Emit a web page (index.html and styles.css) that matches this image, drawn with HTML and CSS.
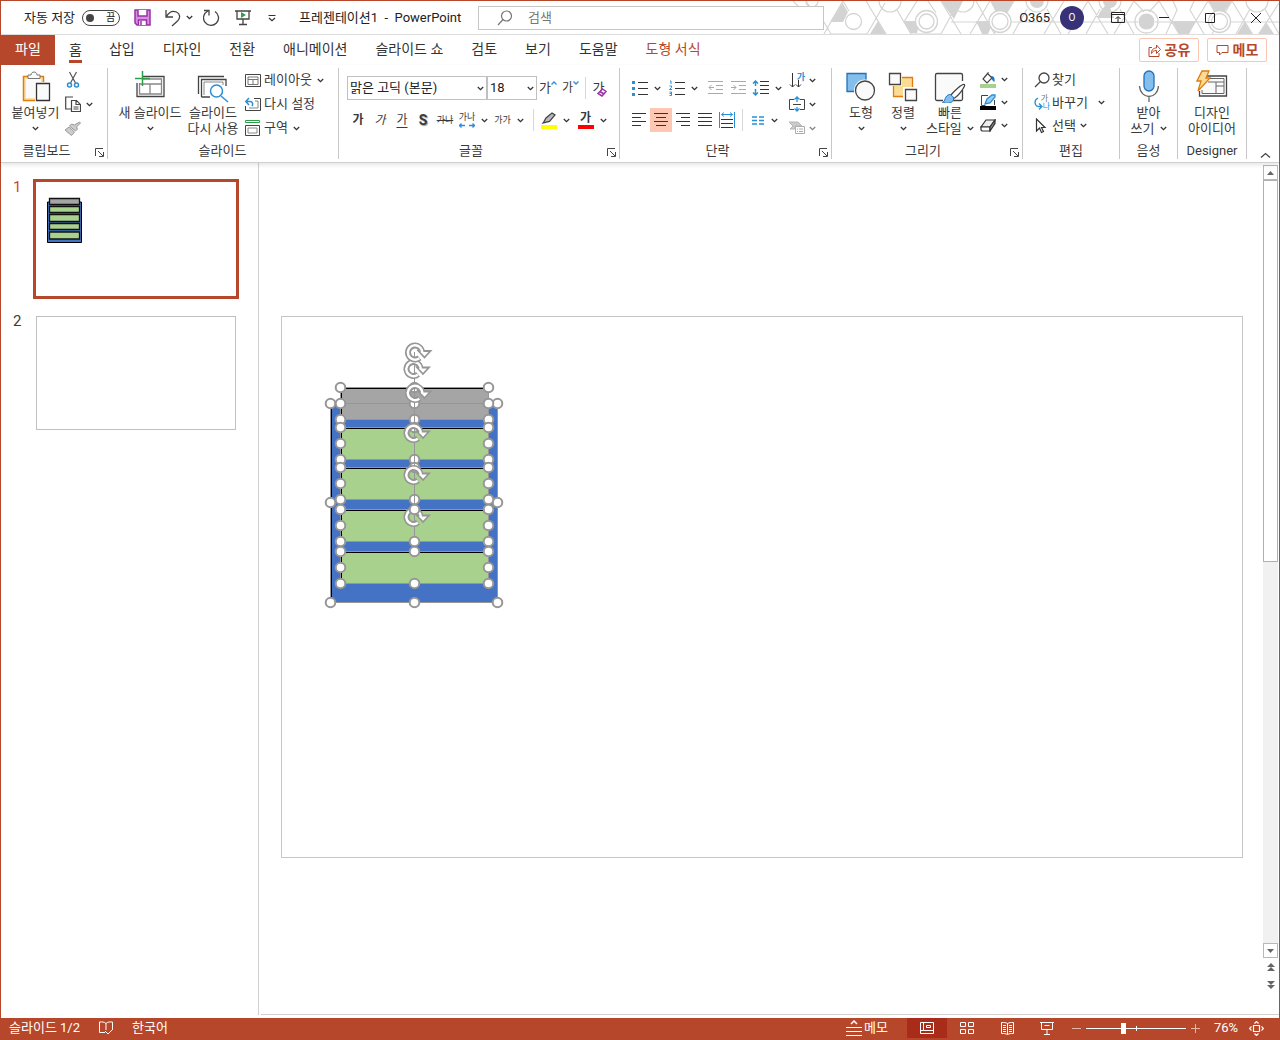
FILE: index.html
```html
<!DOCTYPE html>
<html lang="ko">
<head>
<meta charset="utf-8">
<meta name="viewport" content="width=device-width, initial-scale=1">
<title>프레젠테이션1 - PowerPoint</title>
<link rel="stylesheet" href="styles.css">
</head>
<body>
<svg class="defs" aria-hidden="true">
  <symbol id="chev" viewBox="0 0 7 5"><path d="M.8 1l2.7 2.6L6.200 1" fill="none" stroke="#333" stroke-width="1.300"/></symbol>
  <symbol id="launch" viewBox="0 0 9 9"><path d="M.5 8V.5H8M3 3l5 5M8.500 4v4.500H4" fill="none" stroke="#444"/></symbol>
  <symbol id="rotor" viewBox="-12 -12 30 24" overflow="visible">
    <path d="M7 0A7 7 0 1 0 4.500 5.400" fill="none" stroke="#969696" stroke-width="6"/>
    <path d="M3.500 -1.500H15.500L9.500 5Z" fill="#fff" stroke="#969696" stroke-width="1.800"/>
    <path d="M7.200 .5A7.200 7.200 0 1 0 4.300 5.800" fill="none" stroke="#fff" stroke-width="2.400"/>
  </symbol>
  <symbol id="dot" viewBox="-6 -6 12 12" overflow="visible"><circle r="4.800" fill="#fff" stroke="#969696" stroke-width="2"/></symbol>
</svg>
<div class="window">
  <header class="titlebar">
    <svg class="title-art" viewBox="790 1 489 34" width="489" height="34" aria-hidden="true">
      <g fill="#d3d3d3">
        <path d="M842 2l6 10-5 10h-13zM878 21l8 13h-16zM903 21h17l-3 12h-7zM941 1h22l-9 18zM976 21h18l-6 13h-6zM990 1h24l-7 11h-11zM1100 12l8-10 6 16h-17zM1172 21h24l-7 13h-10zM1208 1h24l-8 11h-10zM1245 21l8 13h-16zM1266 22l8 12h-16z"/>
        <circle cx="1037" cy="1" r="7"/><circle cx="1110" cy="1" r="7"/><circle cx="1146.500" cy="21.500" r="8"/>
      </g>
      <g fill="none" stroke="#d5d5d5" stroke-width="1.200">
        <path d="M793 1l6 6M806 1l4 6M843 1l-19 33M843 1l6 10M824 22l7 12h36l18-31M866 1l20 33M897 10l14 24h30l18-33M917 1l-13 21h17M928 1l8 12M941 1l20 33M951 22h43M976 1l18 32M990 1l-20 33M1014 1l-20 33M1005 22h60M1027 9l-14 25M1047 9l14 25M1064 1l-20 33M1088 1l-20 33M1088 1l20 33M1100 9l-14 25M1120 9l14 25M1080 22h58M1134 1l-20 33M1134 1l10 11M1159 1l-10 11M1159 1l20 33M1155 22h58M1173 1l4 9-11 24M1194 1l-4 9 14 24M1208 1l-20 33M1208 1l10 11M1232 1l-20 33M1228 22h51M1232 1l20 33M1250 9l-14 25M1265 9l14 25M1279 3l-20 31"/>
        <circle cx="890" cy="1" r="11"/><circle cx="963" cy="1" r="11"/><circle cx="1037" cy="1" r="11"/><circle cx="1110" cy="1" r="11"/><circle cx="1257" cy="1" r="11"/><circle cx="812" cy="1" r="6"/>
      </g>
      <g fill="none" stroke="#d3d3d3" stroke-width="1.300">
        <circle cx="853.500" cy="21.500" r="8" fill="#fff"/><circle cx="926.500" cy="21.500" r="11" fill="#fff"/><circle cx="926.500" cy="21.500" r="7.500"/><circle cx="1000" cy="21.500" r="11" fill="#fff"/><circle cx="1000" cy="21.500" r="8"/><circle cx="1146.500" cy="21.500" r="11.500"/><circle cx="1219.500" cy="21.500" r="11" fill="#fff"/><circle cx="1219.500" cy="21.500" r="8"/>
      </g>
    </svg>
    <div class="quick">
      <label class="autosave">자동 저장 <span class="toggle"><input type="checkbox"><span>끔</span></span></label>
      <button aria-label="저장"><svg width="17" height="17"><path d="M1 1h15v15H3l-2-2z" fill="#d78ee0" stroke="#9a2fa8" stroke-width="1.500"/><path d="M4 1v6h9V1M4.500 16v-5h8v5" fill="#fff" stroke="#9a2fa8" stroke-width="1.500"/><path d="M7 12v4" stroke="#9a2fa8" stroke-width="1.500"/></svg></button>
      <button aria-label="실행 취소" class="undo"><svg width="16" height="18" fill="none" stroke="#444" stroke-width="1.300"><path d="M1 1v7h7M1.500 7.500C4 3 8 1.500 11.500 3c4 2 4 6 1 9L7 17"/></svg><svg class="chev"><use href="#chev"/></svg></button>
      <button aria-label="다시 실행"><svg width="18" height="18" fill="none" stroke="#444" stroke-width="1.300"><path d="M12 2.500a7.500 7.500 0 1 1-7-.5M1 1.500h5v5"/></svg></button>
      <button aria-label="슬라이드 쇼 시작"><svg width="16" height="17" fill="none" stroke="#444" stroke-width="1.300"><path d="M0 2h16M2 2v8h12V2M8 10v5M4 15.500h8"/><path d="M6 3l5 3-5 3z" fill="#2e9e4b" stroke="none"/></svg></button>
      <button aria-label="빠른 실행 도구 모음 사용자 지정"><svg width="8" height="8" fill="none" stroke="#333" stroke-width="1.200"><path d="M.5 1.500h7M1 4l3 2.800L7 4"/></svg></button>
    </div>
    <h1 class="doc-title">프레젠테이션1&nbsp; -&nbsp; PowerPoint</h1>
    <div class="search"><svg width="16" height="16" fill="none" stroke="#777" stroke-width="1.200"><circle cx="9.500" cy="6" r="5"/><path d="M6 9.500L1 15"/></svg><input type="text" placeholder="검색" aria-label="검색"></div>
    <div class="account">
      <span>O365</span><button class="avatar" aria-label="계정">O</button>
    </div>
    <div class="sysbtns">
      <button aria-label="리본 표시 옵션"><svg width="14" height="11" fill="none" stroke="#222"><path d="M.5.5h13v10H.5zM.5 2.500h13M7 10V5M4.500 7L7 4.500 9.500 7"/></svg></button>
      <button aria-label="최소화"><svg width="10" height="10"><path d="M0 4.500h10" stroke="#222"/></svg></button>
      <button aria-label="최대화"><svg width="10" height="10"><path d="M.5.5h9v9h-9z" fill="none" stroke="#222"/></svg></button>
      <button aria-label="닫기"><svg width="10" height="10"><path d="M0 0l10 10M10 0L0 10" stroke="#222"/></svg></button>
    </div>
  </header>

  <nav class="tabs">
    <a href="#" class="file">파일</a>
    <a href="#" class="active">홈</a>
    <a href="#">삽입</a><a href="#">디자인</a><a href="#">전환</a><a href="#">애니메이션</a><a href="#">슬라이드 쇼</a><a href="#">검토</a><a href="#">보기</a><a href="#">도움말</a><a href="#" class="context">도형 서식</a>
    <span class="tab-actions">
      <button><svg width="13" height="13" fill="none" stroke="#b7472a"><path d="M4 3.500H1v9h10V9M3.500 9.500c0-4 2-5.500 5-5.500V1l4 4.500-4 4V6.500c-2.500 0-4 1-5 3z"/></svg>공유</button>
      <button><svg width="13" height="12" fill="none" stroke="#b7472a"><path d="M1 1.500h11v7H6L3.500 11V8.500H1z"/></svg>메모</button>
    </span>
  </nav>

  <section class="ribbon">
    <div class="group g-clip">
      <div class="body">
        <button class="big paste"><svg width="30" height="33"><path d="M2.500 6.500h20v24h-20z" fill="#fce0a5" stroke="#e07c10" stroke-width="1.500"/><path d="M5 9h15v19H5z" fill="#fafafa"/><path d="M7 8.500V5h3c0-4 6-4 6 0h3v3.500z" fill="#fafafa" stroke="#777"/><path d="M14 12h16v20H14z" fill="#fff"/><path d="M15.500 13.500h13v17h-13z" fill="#fafafa" stroke="#333" stroke-width="1.300"/></svg><span>붙여넣기</span><svg class="chev"><use href="#chev"/></svg></button>
        <div class="stack">
          <button aria-label="잘라내기"><svg width="16" height="18" fill="none" stroke-width="1.200"><path d="M4.500 1l6 11M11.500 1l-6 11" stroke="#555"/><circle cx="4.500" cy="14" r="2" stroke="#2b8fd6" stroke-width="1.500"/><circle cx="11.500" cy="14" r="2" stroke="#2b8fd6" stroke-width="1.500"/></svg></button>
          <button aria-label="복사"><svg width="16" height="17" fill="#fff" stroke="#444" stroke-width="1.200"><path d="M8 1H.7v12H6"/><path d="M6.500 4.500h5l4 4v7h-9zM11 4.500v4h4.500M8.500 11h5M8.500 13h5"/></svg><svg class="chev"><use href="#chev"/></svg></button>
          <button aria-label="서식 복사"><svg width="16" height="15" fill="#ccc" stroke="#999"><path d="M14.500 1l1 1-4 4 1 2-2 2-6-5 2-2 3 1zM4 6l5.500 5-3 3.500L0 9z"/></svg></button>
        </div>
      </div>
      <footer>클립보드<button class="launch" aria-label="클립보드 옵션"><svg><use href="#launch"/></svg></button></footer>
    </div>

    <div class="group g-slides">
      <div class="body">
        <button class="big new"><svg width="32" height="33" fill="none"><path d="M8 6.500h22v20H3V13" stroke="#444" stroke-width="1.300"/><path d="M9 9h18.500v15H5.500V13M5.500 14h22M16 14v10" stroke="#888" stroke-width="1.300"/><path d="M8.500 1v15M1 8.500h15" stroke="#2e9e4b" stroke-width="1.500"/></svg><span>새 슬라이드</span><svg class="chev"><use href="#chev"/></svg></button>
        <button class="big reuse"><svg width="32" height="33" fill="none"><path d="M1.500 24V6.500H27M4.500 27V9.500H29V16M4.500 27H13" stroke="#444" stroke-width="1.300"/><path d="M7 25V12h19v3" stroke="#888"/><circle cx="19.500" cy="21" r="6" fill="#fff" stroke="#2b8fd6" stroke-width="1.500"/><path d="M24 26l7 6" stroke="#2b8fd6" stroke-width="1.500"/></svg><span>슬라이드<br>다시 사용</span></button>
        <div class="stack">
          <button><svg width="16" height="13" fill="none" stroke="#444"><path d="M.5.5h15v12H.5z"/><path d="M3 3h10v7.500H3zM3 5.500h10M8 5.500v5" stroke="#777"/></svg><span>레이아웃</span><svg class="chev"><use href="#chev"/></svg></button>
          <button><svg width="16" height="14" fill="none" stroke="#444"><path d="M9 1.500h6.500v12H.5V9"/><path d="M10 4h3v7H4" stroke="#888"/><path d="M1 4.500h4c3 0 3 3 2 4.500M4 1L.8 4.500 4 8" stroke="#2b8fd6" stroke-width="1.500"/></svg><span>다시 설정</span></button>
          <button><svg width="16" height="16" fill="none" stroke="#444"><path d="M.5.500h14v2H.5z" stroke="#2e9e4b"/><path d="M.5 5.500h14v10H.5z"/><path d="M3 8h9v5H3z" stroke="#888"/></svg><span>구역</span><svg class="chev"><use href="#chev"/></svg></button>
        </div>
      </div>
      <footer>슬라이드</footer>
    </div>

    <div class="group g-font">
      <div class="body rows">
        <div class="row font1">
          <select aria-label="글꼴"><option>맑은 고딕 (본문)</option></select>
          <select aria-label="글꼴 크기"><option>18</option></select>
          <button aria-label="글꼴 크게" class="glyph-top">가<svg width="6" height="4" fill="none" stroke="#2b8fd6" stroke-width="1.300"><path d="M.5 3.500L3 1l2.500 2.500"/></svg></button>
          <button aria-label="글꼴 작게" class="glyph-top small">가<svg width="6" height="4" fill="none" stroke="#2b8fd6" stroke-width="1.300"><path d="M.5.500L3 3 5.500.500"/></svg></button>
          <i class="sep"></i>
          <button aria-label="서식 지우기" class="clear">가<svg width="10" height="9" fill="#fff" stroke="#9a2fa8" stroke-width="1.500"><path d="M5.500 1l3.500 2.500-4 4.500L1 5.500zM3 3.500L7 6"/></svg></button>
        </div>
        <div class="row font2">
          <button class="b">가</button><button class="i">가</button><button class="u">가</button><button class="s">S</button><button class="strike">가나</button>
          <button class="tiny"><span class="spacing">가나<svg width="16" height="5" fill="none" stroke="#2b8fd6" stroke-width="1.300"><path d="M0 2.500h6M10 2.500h6M2.500.500l-2 2 2 2M13.500.500l2 2-2 2"/></svg></span><svg class="chev"><use href="#chev"/></svg></button>
          <button class="tiny"><span>가가</span><svg class="chev"><use href="#chev"/></svg></button>
          <i class="sep"></i>
          <button aria-label="강조 색"><svg width="16" height="17"><path d="M3 9.500L5 6l6-5 3 2-5.500 6.500L2 11z" fill="#bbb" stroke="#444" stroke-width="1.300"/><path d="M0 13h16v4H0z" fill="#ff0"/></svg><svg class="chev"><use href="#chev"/></svg></button>
          <button aria-label="글꼴 색"><span class="fontcolor">가</span><svg class="chev"><use href="#chev"/></svg></button>
        </div>
      </div>
      <footer>글꼴<button class="launch" aria-label="글꼴 옵션"><svg><use href="#launch"/></svg></button></footer>
    </div>

    <div class="group g-para">
      <div class="body">
        <div class="rows">
          <div class="row para1">
            <button aria-label="글머리 기호"><svg width="16" height="16"><path d="M0 1h3v3H0zM0 7h3v3H0zM0 13h3v3H0z" fill="#2b8fd6"/><path d="M6 2.500h10M6 8.500h10M6 14.500h10" stroke="#333"/></svg><svg class="chev"><use href="#chev"/></svg></button>
            <button aria-label="번호 매기기"><svg width="16" height="16" fill="none"><path d="M1 1h1v3M.500 6h2v1.500l-2 2h2.500M.500 12h2v3.500h-2M.500 13.500h2" stroke="#2b8fd6"/><path d="M6 2.500h10M6 8.500h10M6 14.500h10" stroke="#333"/></svg><svg class="chev"><use href="#chev"/></svg></button>
            <button aria-label="목록 수준 줄임"><svg width="15" height="14" fill="none" stroke="#aaa"><path d="M0 .500h15M8 4.500h7M8 8.500h7M0 12.500h15M1 6.500h5M3.500 4L1 6.500 3.500 9"/></svg></button>
            <button aria-label="목록 수준 늘림"><svg width="15" height="14" fill="none" stroke="#aaa"><path d="M0 .500h15M8 4.500h7M8 8.500h7M0 12.500h15M0 6.500h5M2.500 4L5 6.500 2.500 9"/></svg></button>
            <button aria-label="줄 간격"><svg width="17" height="16" fill="none"><path d="M3.500 1v5M3.500 9v6M1 3.500L3.500 1 6 3.500M1 12.500L3.500 15 6 12.500" stroke="#2b8fd6" stroke-width="1.500"/><path d="M8 1.500h9M8 5.500h9M8 9.500h9M8 13.500h9" stroke="#333"/></svg><svg class="chev"><use href="#chev"/></svg></button>
          </div>
          <div class="row para2">
            <button aria-label="왼쪽 맞춤"><svg width="14" height="14" stroke="#333"><path d="M0 .500h14M0 4.500h9M0 8.500h14M0 12.500h9"/></svg></button>
            <button aria-label="가운데 맞춤" class="on"><svg width="14" height="14" stroke="#333"><path d="M0 .500h14M2 4.500h10M0 8.500h14M2 12.500h10"/></svg></button>
            <button aria-label="오른쪽 맞춤"><svg width="14" height="14" stroke="#333"><path d="M0 .500h14M5 4.500h9M0 8.500h14M5 12.500h9"/></svg></button>
            <button aria-label="양쪽 맞춤"><svg width="14" height="14" stroke="#333"><path d="M0 .500h14M0 4.500h14M0 8.500h14M0 12.500h14"/></svg></button>
            <button aria-label="균등 분할"><svg width="16" height="16" fill="none"><path d="M.500 0v16M15.500 0v16M2.500 2.500h11M5 .500l-2.500 2L5 4.500M11 .500l2.500 2-2.500 2" stroke="#2b8fd6"/><path d="M2 7.500h12M2 11.500h12M2 15.500h12" stroke="#333"/></svg></button>
            <i class="sep"></i>
            <button aria-label="단"><svg width="13" height="9" stroke="#2b8fd6" stroke-width="1.300"><path d="M0 1h5M0 4.500h5M0 8h5M7 1h5M7 4.500h5M7 8h5"/></svg><svg class="chev"><use href="#chev"/></svg></button>
          </div>
        </div>
        <div class="stack dirs">
          <button aria-label="텍스트 방향"><span class="textdir"><svg width="13" height="17" fill="none" stroke="#333"><path d="M3.500 1v14M1 12.500L3.500 15 6 12.500M9.500 8v7M7 12.500L9.500 15 12 12.500"/></svg><b>가</b></span><svg class="chev"><use href="#chev"/></svg></button>
          <button aria-label="텍스트 맞춤"><svg width="16" height="16" fill="none"><path d="M5 3.500H.500v10H5M11 3.500h4.500v10H11M4 8.500h8" stroke="#444"/><path d="M8 1v5M8 11v4M5.500 3.500L8 1l2.500 2.500M5.500 12.500L8 15l2.500-2.500" stroke="#2b8fd6" stroke-width="1.300"/></svg><svg class="chev"><use href="#chev"/></svg></button>
          <button aria-label="SmartArt로 변환" disabled><svg width="16" height="14"><path d="M0 1h9l4 4H6v3H1l3-3z" fill="#aaa" stroke="#888"/><path d="M6.500 5.500h9v7h-9z" fill="#fff" stroke="#777"/><path d="M8 8h1M10 8h4M8 10.500h1M10 10.500h4" stroke="#777"/></svg><svg class="chev"><use href="#chev"/></svg></button>
        </div>
      </div>
      <footer>단락<button class="launch" aria-label="단락 옵션"><svg><use href="#launch"/></svg></button></footer>
    </div>

    <div class="group g-draw">
      <div class="body">
        <button class="big shapes"><svg width="30" height="33"><path d="M1 3.500h19v18H1z" fill="#83beec" stroke="#1f72bd" stroke-width="1.300"/><circle cx="19" cy="20.500" r="11" fill="#fff"/><circle cx="19" cy="20.500" r="9.500" fill="#fafafa" stroke="#444" stroke-width="1.300"/></svg><span>도형</span><svg class="chev"><use href="#chev"/></svg></button>
        <button class="big shapes"><svg width="30" height="33" fill="#fafafa" stroke="#444" stroke-width="1.300"><path d="M5.500 7.500h19v19h-19z" fill="#fbdc94" stroke="#e07c10"/><path d="M0 2h14v14H0zM15 17h15v15H15z" fill="#fff" stroke="none"/><path d="M1.500 3.500h11v11h-11zM17.500 19.500h11v11h-11z"/></svg><span>정렬</span><svg class="chev"><use href="#chev"/></svg></button>
        <button class="big quickst"><svg width="32" height="33"><path d="M9 30.500H3a1.500 1.500 0 0 1-1.500-1.500V5A1.500 1.500 0 0 1 3 3.500h24A1.500 1.500 0 0 1 28.500 5v6M28.500 20v9a1.500 1.500 0 0 1-1.500 1.500h-8" fill="#fafafa" stroke="#444" stroke-width="1.300"/><path d="M30.500 14.500c1.500 1-6 12-11 14l-3-3C20 21 28 13.500 30.500 14.500z" fill="#fff" stroke="#444" stroke-width="1.300"/><path d="M15.500 24.500c2 0 5 3 4 5.500-2 4-8 3.500-11 2.500 3-1 2-7 7-8z" fill="#83beec" stroke="#1f72bd"/></svg><span>빠른<br>스타일 <svg class="chev"><use href="#chev"/></svg></span></button>
        <div class="stack tight">
          <button aria-label="도형 채우기"><svg width="16" height="16"><path d="M8 1L3 7l4 4 5-5-4-4z" fill="#fff" stroke="#444" stroke-width="1.200"/><path d="M11 4c3 0 4 2 3.500 6C12 9 12 7 11 4z" fill="#1f72bd"/><path d="M0 12h16v4H0z" fill="#a9d18e"/></svg><svg class="chev"><use href="#chev"/></svg></button>
          <button aria-label="도형 윤곽선"><svg width="16" height="17"><path d="M8 1.500H1.500v10h4M14.500 6v5" fill="none" stroke="#444"/><path d="M5 10l2-5 5-4h3v2L10 9z" fill="#9dcdf2" stroke="#2b8fd6" stroke-width="1.300"/><path d="M0 12h16v4H0z"/></svg><svg class="chev"><use href="#chev"/></svg></button>
          <button aria-label="도형 효과"><svg width="16" height="13" stroke="#333" stroke-width="1.200"><path d="M6 1h9l-5 7H1z" fill="#eee"/><path d="M1 8h9v4H2l-1-1z" fill="#fff"/><path d="M15 1v3.500L10 12V8z" fill="#888"/></svg><svg class="chev"><use href="#chev"/></svg></button>
        </div>
      </div>
      <footer>그리기<button class="launch" aria-label="그리기 옵션"><svg><use href="#launch"/></svg></button></footer>
    </div>

    <div class="group g-edit">
      <div class="body">
        <div class="stack tight">
          <button><svg width="16" height="16" fill="none" stroke="#444" stroke-width="1.300"><circle cx="10" cy="6" r="5"/><path d="M6.500 9.500L1 15"/></svg><span>찾기</span></button>
          <button class="replace"><span class="swap"><svg width="16" height="16" fill="none" stroke="#2b8fd6" stroke-width="1.300"><path d="M4 3C0 5 0 10 4 11.500h3M5 8.500l3 3-3 3"/></svg><small>가</small><small class="na">나</small></span><span>바꾸기</span><svg class="chev"><use href="#chev"/></svg></button>
          <button><svg width="16" height="16" fill="#fff" stroke="#333" stroke-width="1.200"><path d="M2.500 1v12l3-3 2 4.500 2-1-2-4H11z"/></svg><span>선택</span><svg class="chev"><use href="#chev"/></svg></button>
        </div>
      </div>
      <footer>편집</footer>
    </div>

    <div class="group g-voice">
      <div class="body">
        <button class="big"><svg width="22" height="33"><rect x="6" y="1" width="10" height="20" rx="5" fill="#83beec" stroke="#1f72bd" stroke-width="1.300"/><path d="M1.500 16c1 14 18 14 19 0M11 26.500V32" fill="none" stroke="#666" stroke-width="1.300"/></svg><span>받아<br>쓰기 <svg class="chev"><use href="#chev"/></svg></span></button>
      </div>
      <footer>음성</footer>
    </div>

    <div class="group g-designer">
      <div class="body">
        <button class="big"><svg width="32" height="33"><path d="M10 6h20.500v20H3.500V21" fill="none" stroke="#444" stroke-width="1.300"/><path d="M12 8.500h16v15H6V20M12 12h16M20 12v11M20 16h8" fill="#fafafa" stroke="#666"/><path d="M6 1h7l-3 7h4L2 21l3-10H1z" fill="#fbdc94" stroke="#e07c10" stroke-width="1.300"/></svg><span>디자인<br>아이디어</span></button>
      </div>
      <footer>Designer</footer>
    </div>
    <button class="collapse" aria-label="리본 메뉴 축소"><svg width="11" height="6" fill="none" stroke="#444" stroke-width="1.300"><path d="M1 5.500l4.500-4 4.500 4"/></svg></button>
  </section>

  <main class="work">
    <ol class="thumbs">
      <li class="current"><span>1</span><a href="#" class="thumb" aria-label="슬라이드 1">
        <svg viewBox="36 182 200 114"><path d="M47.500 202h34v40.500h-34z" fill="#4472c4" stroke="#000"/><g fill="#a9d18e" stroke="#111" stroke-width="1.300"><path d="M49.500 198.500h30v6h-30z" fill="#a5a5a5"/><path d="M49.500 206.500h30v6h-30zM49.500 214.500h30v7h-30zM49.500 223.500h30v6h-30zM49.500 232h30v7h-30z"/></g></svg></a></li>
      <li><span>2</span><a href="#" class="thumb" aria-label="슬라이드 2"></a></li>
    </ol>
    <div class="canvas">
      <div class="slide">
        <svg viewBox="282 317 960 540" role="img" aria-label="선택된 도형">
          <path d="M331 404h167v199H331z" fill="#4472c4"/>
          <g fill="#a9d18e"><path d="M341 388h148v32H341z" fill="#a5a5a5"/><path d="M341 428h148v32H341zM341 468h148v32H341zM341 510h148v32H341zM341 552h148v32H341z"/></g>
          <path d="M331.500 603V404M341.500 420v-32H489M341.500 460v-31.500H489M341.500 500v-31.500H489M341.500 542v-31.500H489M341.500 584v-31.500H489" fill="none" stroke="#000"/>
          <path d="M330.500 403.500h167v199h-167zM340.500 387.500h148v32h-148zM340.500 427.500h148v32h-148zM340.500 467.500h148v32h-148zM340.500 509.500h148v32h-148zM340.500 551.500h148v32h-148z" fill="none" stroke="#969696"/>
          <path d="M341 388.500H489M341 428.500H489M341 468.500H489M341 510.500H489M341 552.500H489" stroke="#000"/>
          <g id="handles"></g>
        </svg>
      </div>
    </div>
    <div class="scroll">
      <button aria-label="위로"><svg width="7" height="4"><path d="M3.500 0L7 4H0z" fill="#666"/></svg></button>
      <div class="track"><div class="grip"></div></div>
      <button aria-label="아래로"><svg width="7" height="4"><path d="M0 0h7L3.500 4z" fill="#666"/></svg></button>
      <button class="page" aria-label="이전 슬라이드"><svg width="8" height="8" fill="#666"><path d="M4 0l4 4H0zM4 4l4 4H0z"/></svg></button>
      <button class="page" aria-label="다음 슬라이드"><svg width="8" height="8" fill="#666"><path d="M0 0h8L4 4zM0 4h8L4 8z"/></svg></button>
    </div>
  </main>

  <footer class="status">
    <span>슬라이드 1/2</span>
    <button aria-label="맞춤법 검사"><svg width="15" height="14" fill="none" stroke="#fff"><path d="M7 2.500C5 .500 3 1 .500 1v10.500H6M7 2.500C9 .500 11 1 13.500 1v7M7 2.500V9M6 10l3 3 5-5"/></svg></button>
    <button>한국어</button>
    <span class="push"></span>
    <button class="notes"><svg width="16" height="16" fill="none" stroke="#fff"><path d="M5 4l3-3 3 3" stroke-width="1.500"/><path d="M0 7.500h16M0 11.500h16M0 15.500h16"/></svg>메모</button>
    <button class="view on" aria-label="기본"><svg width="14" height="12" fill="none" stroke="#fff"><path d="M.500.500h13v11H.500zM3.500.500v8h10M.500 8.500h3M6.500 3.500h4v2h-4z"/></svg></button>
    <button class="view" aria-label="여러 슬라이드"><svg width="14" height="12" fill="none" stroke="#fff"><path d="M.500.500h5v4h-5zM8.500.500h5v4h-5zM.500 7.500h5v4h-5zM8.500 7.500h5v4h-5z"/></svg></button>
    <button class="view" aria-label="읽기용 보기"><svg width="13" height="13" fill="none" stroke="#fff"><path d="M6.500 1.500C5 .500 3 .500.500.500v11c3 0 4 0 6 1 2-1 3-1 6-1V.500c-3 0-4 0-6 1v11M2 3.500h3M2 5.500h3M2 7.500h3M2 9.500h3M8 3.500h3M8 5.500h3M8 7.500h3M8 9.500h3"/></svg></button>
    <button class="view" aria-label="슬라이드 쇼"><svg width="14" height="13" fill="none" stroke="#fff"><path d="M0 .500h14M1.500.500v7h11v-7M4.500 3.500h5M7 7.500v5M4 12.500h6"/></svg></button>
    <button class="zoom-step" aria-label="축소"><svg width="9" height="9"><path d="M0 4.500h9" stroke="#e5b5a8"/></svg></button>
    <input type="range" min="10" max="190" value="76" aria-label="확대/축소">
    <button class="zoom-step" aria-label="확대"><svg width="9" height="9"><path d="M0 4.500h9M4.500 0v9" stroke="#e5b5a8"/></svg></button>
    <button class="percent">76%</button>
    <button class="fit" aria-label="창에 맞춤"><svg width="15" height="15" fill="none" stroke="#fff" stroke-width="1.200"><path d="M4.500 4.500h6v6h-6zM5.500 2.500l2-2 2 2M5.500 12.500l2 2 2-2M2.500 5.500l-2 2 2 2M12.500 5.500l2 2-2 2"/></svg></button>
  </footer>
</div>
<script src="script.js"></script>
</body>
</html>
```
FILE: styles.css
```css
* { box-sizing: border-box; }
body { margin: 0; font: 13px/16px Roboto, "Noto Sans CJK KR", sans-serif; color: #3a3a3a; background: #fff; }
button { display: flex; align-items: center; justify-content: center; padding: 0; border: 0; background: none; font: inherit; color: inherit; white-space: nowrap; }
svg { display: block; flex: none; }
.defs { position: absolute; width: 0; height: 0; }
.chev { width: 7px; height: 5px; }
.window { display: flex; flex-direction: column; min-height: 100vh; border: 1px solid #b7472a; border-bottom: 0; }

/* Title bar */
.titlebar { position: relative; display: flex; align-items: center; height: 34px; border-bottom: 1px solid #ddd; color: #222; }
.title-art { position: absolute; right: 0; top: 0; z-index: -1; }
.quick { display: flex; align-items: center; width: 298px; padding-left: 23px; gap: 14px; }
.autosave { display: flex; align-items: center; gap: 7px; white-space: nowrap; }
.toggle { display: flex; align-items: center; width: 38px; height: 16px; padding: 0 4px 0 3px; border: 1px solid #444; border-radius: 8px; justify-content: space-between; font-size: 10px; }
.toggle input { appearance: none; width: 8px; height: 8px; margin: 0; border-radius: 50%; background: #444; }
.undo { gap: 5px; margin-right: -4px; }
.quick button:last-child { margin-left: 3px; }
.doc-title { margin: 0; width: 179px; font-size: 13px; font-weight: 400; white-space: nowrap; }
.search { display: flex; align-items: center; flex: 1; height: 24px; padding-left: 18px; gap: 15px; border: 1px solid #c6c6c6; background: #fff; }
.search input { flex: 1; min-width: 0; border: 0; padding: 0; background: none; font: inherit; outline: 0; }
.search input::placeholder { color: #777; }
.account { display: flex; align-items: center; gap: 10px; margin-left: 195px; }
.avatar { width: 24px; height: 24px; border-radius: 50%; background: #373277; color: #fff; font-size: 10px; }
.sysbtns { display: flex; margin-left: 11px; }
.sysbtns button { width: 46px; height: 32px; }

/* Tabs */
.tabs { display: flex; align-items: center; height: 30px; font-size: 14px; }
.tabs a { display: flex; align-items: center; height: 30px; margin-right: 28px; padding-bottom: 2px; color: #333; text-decoration: none; white-space: nowrap; }
.tabs .file { width: 54px; justify-content: center; margin-right: 14px; background: #b7472a; color: #fff; }
.tabs .active { height: 26px; margin-right: 27px; padding: 0 0 1px; border-bottom: 3px solid #b7472a; border-top: 3px solid transparent; }
.tabs .context { color: #b7472a; }
.tab-actions { display: flex; gap: 8px; margin-left: auto; padding-right: 12px; }
.tab-actions button { width: 60px; height: 24px; gap: 4px; border: 1px solid #fbc6b4; border-radius: 2px; background: #fff; color: #b7472a; font-weight: 700; }

/* Ribbon */
.ribbon { position: relative; z-index: 1; display: flex; height: 98px; padding-top: 3px; border-bottom: 1px solid #d0d0d0; box-shadow: 0 2px 4px #0000001a; background: #fff; }
.group { position: relative; display: flex; flex-direction: column; height: 91px; border-right: 1px solid #c8c8c8; }
.group .body { display: flex; height: 78px; }
.group > footer { position: relative; text-align: center; }
.launch { position: absolute; right: 3px; bottom: 2px; }
.launch svg { width: 9px; height: 9px; }
.big { flex-direction: column; justify-content: flex-start; text-align: center; }
.big > svg:first-child { margin: 2px 0; }
.big > .chev { margin-top: 5px; }
.big span .chev { display: inline-block; margin: 0 0 2px 2px; }
.stack { display: grid; grid-template-rows: repeat(3, 24px); align-content: start; justify-items: start; }
.stack.tight { grid-template-rows: repeat(3, 23px); }
.stack button { gap: 3px; }
.stack .chev { margin-left: 2px; }
button:disabled { opacity: .6; }
.g-clip { width: 107px; padding-left: 7px; }
.g-clip > footer { padding-right: 22px; }
.paste { width: 55px; }
.g-clip .stack { margin-left: 2px; }
.g-slides { width: 231px; padding-left: 7px; }
.g-slides .stack { margin-left: 4px; }
.g-slides > footer { padding-right: 8px; }
.new { width: 70px; }
.reuse { width: 56px; }
.g-font { width: 281px; padding-left: 8px; }
.g-font > footer { padding-right: 24px; }
.g-font .body, .rows { display: flex; flex-direction: column; padding-top: 7px; gap: 6px; }
.row { display: grid; height: 26px; align-items: center; justify-items: stretch; }
.row button { height: 24px; gap: 6px; }
.sep { width: 1px; height: 22px; justify-self: center; background: #d8d8d8; }
.font1 { grid-template-columns: 140px 50px 22px 23px 6px 24px; }
.font1 select { height: 24px; padding: 0 2px; border: 1px solid #c0c0c0; border-radius: 0; font: inherit; color: #222; appearance: none; background: #fff url("data:image/svg+xml,%3Csvg xmlns='http://www.w3.org/2000/svg' width='7' height='5'%3E%3Cpath d='M.8 1l2.700 2.600L6.200 1' fill='none' stroke='%23333' stroke-width='1.300'/%3E%3C/svg%3E") right 2px center no-repeat; }
.row .glyph-top { gap: 0; }
.glyph-top svg { align-self: flex-start; margin-top: 5px; }
.row .small { font-size: 12px; }
.row .clear { gap: 0; }
.clear svg { margin: 8px 0 0 -7px; }
.font2 { grid-template-columns: 22px 22px 22px 20px 24px 33px 38px 10px 35px 38px; font-size: 12px; }
.b, .s { font-weight: 700; }
.i { font-style: italic; }
.u { text-decoration: underline; text-underline-offset: 3px; }
.s { font-size: 14px; text-shadow: 1px 1px 1px #999; }
.strike { font-size: 9px; text-decoration: line-through; }
.font2 .tiny { font-size: 9px; }
.spacing { line-height: 11px; }
.fontcolor { width: 16px; font-weight: 700; line-height: 13px; border-bottom: 4px solid #f00; }
.g-para { width: 212px; padding-left: 8px; }
.g-para > footer { padding-right: 24px; }
.para1 { grid-template-columns: 36px 38px 27px 18px 40px; }
.para2 { grid-template-columns: repeat(5, 22px) 8px 38px; }
.para2 .on { background: #fdc7b4; }
.dirs { margin-left: 2px; }
.dirs .chev { margin-left: 1px; }
.textdir { position: relative; width: 16px; }
.textdir b { position: absolute; top: -3px; right: 0; font-size: 9px; color: #2b8fd6; }
.g-draw { width: 191px; padding-left: 8px; }
.g-draw > footer { padding-right: 16px; }
.shapes { width: 42px; }
.quickst { width: 52px; }
.g-draw .stack { margin-left: 4px; }
.g-edit { width: 97px; padding-left: 11px; }
.g-edit > footer { padding-right: 0; }
.g-edit > footer { margin-left: -11px; }
.g-edit .stack button { gap: 2px; }
.g-edit .replace .chev { margin-left: 8px; }
.swap { position: relative; width: 16px; height: 16px; }
.swap small { position: absolute; top: -4px; right: 2px; font-size: 8px; color: #777; }
.swap .na { top: 4px; right: 0; color: #2b8fd6; }
.g-voice { width: 58px; }
.g-designer { width: 69px; }
.g-voice .body, .g-designer .body { justify-content: center; }
.collapse { margin: auto 8px 4px auto; }

/* Work area */
.work { flex: 1; display: flex; }
.thumbs { width: 258px; margin: 0 0 3px; padding: 16px 0 0; border-right: 1px solid #d0d0d0; list-style: none; }
.thumbs li { display: flex; margin-bottom: 14px; padding-left: 12px; font-size: 15px; }
.thumbs li > span { width: 23px; }
.thumb { width: 200px; height: 114px; border: 1px solid #c0c0c0; margin-top: 3px; }
.thumbs .current { color: #d24726; }
.current > span { margin-right: -3px; }
.current .thumb { width: 206px; height: 120px; margin-top: 0; border: 3px solid #b7472a; }
.canvas { flex: 1; display: flex; align-items: center; padding: 0 20px 4px; margin: 0 0 3px 2px; border-bottom: 1px solid #d0d0d0; }
.slide { width: 100%; border: 1px solid #c6c6c6; }
.slide svg { width: 100%; }
.scroll { display: flex; flex-direction: column; width: 16px; padding: 2px 1px 20px 0; margin-bottom: 3px; border-bottom: 1px solid #d0d0d0; }
.scroll button { height: 15px; border: 1px solid #b8b8b8; }
.scroll .page { height: 18px; border: 0; }
.track { flex: 1; background: #f1f1f1; }
.grip { height: 50%; border: 1px solid #b0b0b0; background: #fff; }

/* Status bar */
.status { display: flex; align-items: center; height: 22px; padding: 0 15px 2px 8px; background: #b7472a; color: #fff; }
.status > button:first-of-type { margin: 0 18px 0 19px; }
.push { flex: 1; }
.notes { gap: 2px; margin-right: 19px; }
.view { width: 40px; height: 20px; }
.view.on { background: #a92b1a; }
.zoom-step { margin: 0 5px; }
.status input { appearance: none; width: 100px; height: 12px; margin: 0; background: linear-gradient(#fff, #fff) center / 100% 1px no-repeat, linear-gradient(#fff, #fff) center / 1px 5px no-repeat; }
.status input::-webkit-slider-thumb { appearance: none; width: 5px; height: 11px; background: #fff; }
.percent { width: 36px; margin-left: 3px; }
.fit { margin-left: 5px; }
```
FILE: script.js
```js
const layer = document.getElementById('handles');
const ns = 'http://www.w3.org/2000/svg';

function place(id, x, y, box) {
  const el = document.createElementNS(ns, 'use');
  el.setAttribute('href', '#' + id);
  el.setAttribute('x', x - box[0]);
  el.setAttribute('y', y - box[1]);
  el.setAttribute('width', box[2]);
  el.setAttribute('height', box[3]);
  layer.append(el);
}
const dot = (x, y) => place('dot', x, y, [6, 6, 12, 12]);
const rotor = (x, y) => place('rotor', x, y, [12, 12, 30, 24]);
function stem(y1, y2) {
  const el = document.createElementNS(ns, 'path');
  el.setAttribute('d', `M414.5 ${y1}V${y2}`);
  el.setAttribute('stroke', '#969696');
  layer.append(el);
}

for (const y of [403.5, 502.5, 602.5]) { dot(330.5, y); dot(497.5, y); }
for (const top of [387.5, 427.5, 467.5, 509.5, 551.5]) {
  for (const y of [top, top + 16, top + 32]) { dot(340.5, y); dot(488.5, y); }
}
for (const y of [387.5, 403.5, 419.5, 427.5, 459.5, 467.5, 499.5]) dot(414.5, y);
stem(352, 551);
for (const [x, y] of [[413.5, 369], [415, 352.5], [415, 393], [413.5, 433], [413.5, 475], [413.5, 517]]) rotor(x, y);
for (const y of [509.5, 541.5, 551.5, 583.5, 602.5]) dot(414.5, y);
```
